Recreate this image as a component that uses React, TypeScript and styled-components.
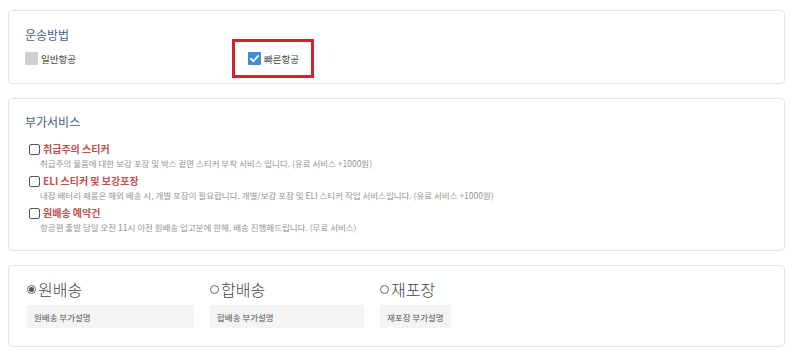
import React from "react";
import styled, { createGlobalStyle } from "styled-components";

const Global = createGlobalStyle`
  html, body { margin: 0; padding: 0; background: #fff; }
  body {
    font-family: "Noto Sans CJK KR", "Noto Sans", sans-serif;
    color: #333;
  }
`;

const Page = styled.div`
  padding: 10px 15px 0 8px;
  display: flex;
  flex-direction: column;
  gap: 14px;
`;

const Panel = styled.section<{ pad: string }>`
  border: 1px solid #e3e3e3;
  border-radius: 4px;
  padding: ${p => p.pad};
`;

const Title = styled.h3`
  margin: 0;
  font-size: 12px;
  font-weight: 400;
  color: #3f5f83;
  line-height: 16px;
`;

const MethodRow = styled.div`
  display: flex;
  align-items: center;
  margin-top: -4px;
`;

const Method = styled.label<{ wide?: boolean }>`
  display: flex;
  align-items: center;
  gap: 3px;
  font-size: 9.5px;
  color: #444;
  width: ${p => (p.wide ? "207px" : "auto")};
`;

const Highlight = styled.div`
  border: 3px solid #d2202e;
  width: 82px;
  height: 39px;
  box-sizing: border-box;
  display: flex;
  align-items: center;
  padding-left: 13px;
`;

const Box = styled.span<{ on?: boolean }>`
  width: 13px;
  height: 13px;
  display: inline-flex;
  align-items: center;
  justify-content: center;
  background: ${p => (p.on ? "#3d8ddb" : "#cfcfcf")};
  border-radius: 1px;
`;

const Extras = styled.div`
  display: flex;
  flex-direction: column;
  gap: 4px;
  margin-top: 12px;
  padding-left: 4px;
`;

const Extra = styled.div``;

const ExtraHead = styled.label`
  display: flex;
  align-items: center;
  gap: 3px;
  font-size: 10px;
  font-weight: 700;
  color: #c0504d;
  line-height: 14px;
`;

const Square = styled.span`
  width: 9px;
  height: 9px;
  border: 1px solid #555;
  border-radius: 2px;
  background: #fff;
`;

const ExtraDesc = styled.p`
  margin: 1px 0 0 11px;
  font-size: 8.5px;
  color: #949494;
  line-height: 13px;
`;

const Options = styled.div`
  display: flex;
  gap: 16px;
`;

const Option = styled.div<{ w?: number }>`
  width: ${p => (p.w ? `${p.w}px` : "auto")};
  display: flex;
  flex-direction: column;
  gap: 6px;
`;

const OptionHead = styled.label`
  display: flex;
  align-items: center;
  gap: 2px;
  font-size: 16px;
  font-weight: 300;
  color: #444;
  line-height: 20px;
`;

const Radio = styled.span<{ on?: boolean }>`
  width: 7px;
  height: 7px;
  border: 1px solid #666;
  border-radius: 50%;
  display: inline-flex;
  align-items: center;
  justify-content: center;
  &::after {
    content: "";
    width: 5px;
    height: 5px;
    border-radius: 50%;
    background: ${p => (p.on ? "#555" : "transparent")};
  }
`;

const Note = styled.div`
  background: #f4f4f4;
  font-size: 8.5px;
  color: #555;
  height: 23px;
  display: flex;
  align-items: center;
  padding: 0 7px;
`;

const Check = () => (
  <svg width="11" height="11" viewBox="0 0 12 12">
    <path d="M2 6.2 L4.8 9 L10 3.2" fill="none" stroke="#fff" strokeWidth="2" strokeLinecap="round" strokeLinejoin="round" />
  </svg>
);

const extras = [
  { title: "취급주의 스티커", desc: "취급주의 물품에 대한 보강 포장 및 박스 겉면 스티커 부착 서비스 입니다. (유료 서비스 +1000원)" },
  { title: "ELI 스티커 및 보강포장", desc: "내장 배터리 제품은 해외 배송 시, 개별 포장이 필요합니다. 개별/보강 포장 및 ELI 스티커 작업 서비스입니다. (유료 서비스 +1000원)" },
  { title: "원배송 예약건", desc: "항공편 출발 당일 오전 11시 이전 원배송 입고분에 한해, 배송 진행해드립니다. (무료 서비스)" },
];

const options = [
  { name: "원배송", note: "원배송 부가설명", on: true, w: 167 },
  { name: "합배송", note: "합배송 부가설명", on: false, w: 154 },
  { name: "재포장", note: "재포장 부가설명", on: false },
];

export default function App() {
  return (
    <>
      <Global />
      <Page>
        <Panel pad="16px 16px 5px 16px">
          <Title>운송방법</Title>
          <MethodRow>
            <Method wide>
              <Box />
              일반항공
            </Method>
            <Highlight>
              <Method>
                <Box on>
                  <Check />
                </Box>
                빠른항공
              </Method>
            </Highlight>
          </MethodRow>
        </Panel>

        <Panel pad="15px 16px 16px 16px">
          <Title>부가서비스</Title>
          <Extras>
            {extras.map(e => (
              <Extra key={e.title}>
                <ExtraHead>
                  <Square />
                  {e.title}
                </ExtraHead>
                <ExtraDesc>{e.desc}</ExtraDesc>
              </Extra>
            ))}
          </Extras>
        </Panel>

        <Panel pad="13px 18px 18px 18px">
          <Options>
            {options.map(o => (
              <Option key={o.name} w={o.w}>
                <OptionHead>
                  <Radio on={o.on} />
                  {o.name}
                </OptionHead>
                <Note>{o.note}</Note>
              </Option>
            ))}
          </Options>
        </Panel>
      </Page>
    </>
  );
}
